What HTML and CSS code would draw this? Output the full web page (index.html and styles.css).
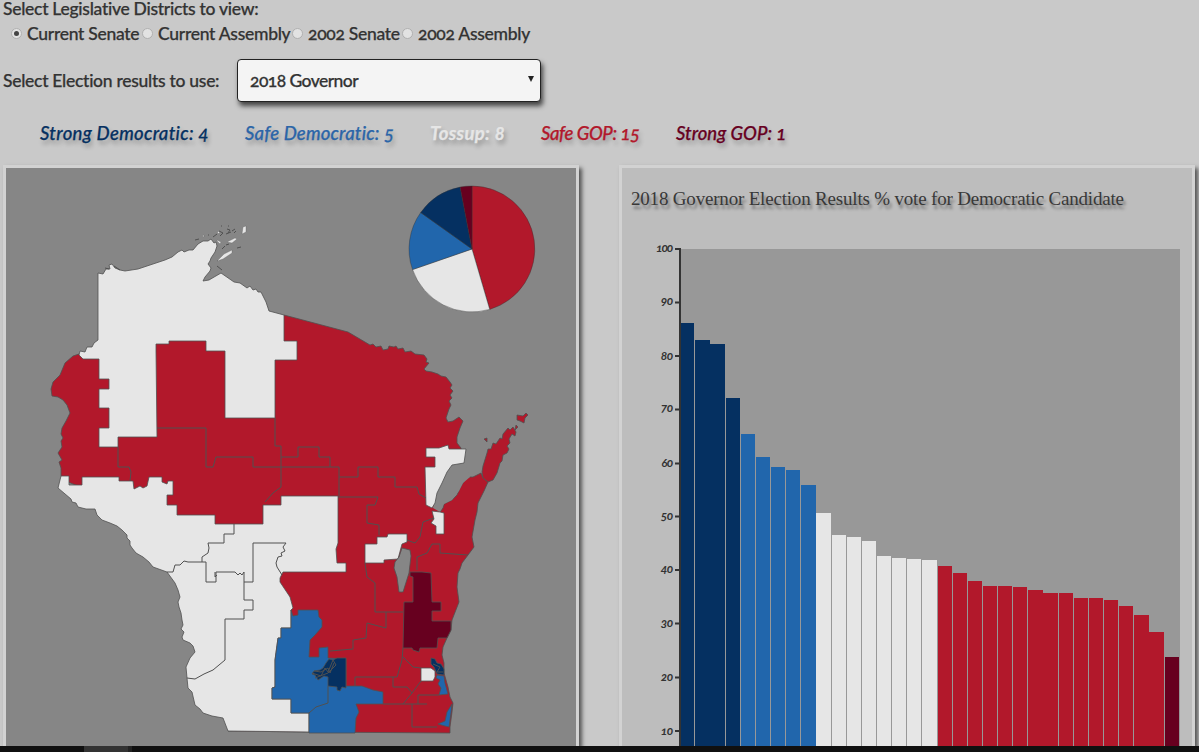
FILE: index.html
```html
<!DOCTYPE html>
<html lang="en">
<head>
<meta charset="utf-8">
<title>Wisconsin Legislative Districts</title>
<link rel="stylesheet" href="styles.css">
</head>
<body>
<main class="page">
  <form class="controls">
    <div class="prompt">Select Legislative Districts to view:</div>
    <div class="radios">
      <label class="option"><span class="dot dot-on"></span><span>Current Senate</span></label>
      <label class="option"><span class="dot"></span><span>Current Assembly</span></label>
      <label class="option"><span class="dot"></span><span>2002 Senate</span></label>
      <label class="option"><span class="dot"></span><span>2002 Assembly</span></label>
    </div>
    <div class="election">
      <span class="election-label">Select Election results to use:</span>
      <div class="select"><span>2018 Governor</span><svg class="caret" viewBox="0 0 6 6"><path d="M0 0h6L3 6z"/></svg></div>
    </div>
  </form>
  <div class="summary">
    <span class="tally strong-dem">Strong Democratic: 4</span>
    <span class="tally safe-dem">Safe Democratic: 5</span>
    <span class="tally tossup">Tossup: 8</span>
    <span class="tally safe-gop">Safe GOP: 15</span>
    <span class="tally strong-gop">Strong GOP: 1</span>
  </div>
  <div class="panels">
    <section class="panel map-panel">
      <svg class="graphic" viewBox="6 168 570 578">
        <g class="districts">
          <path class="r" d="M98 341L110 335L270 335L284 315L348 332L370 345L373 344L376 347L381 346L383 350L388 349L389 346L394 347L396 346L398 349L403 348L405 352L411 351L415 354L424 355L427 359L426 362L429 363L424 369L426 371L432 372L438 374L441 376L446 377L450 382L452 385L450 388L453 391L450 395L452 398L449 401L451 405L449 409L446 418L448 422L453 421L459 417L463 421L460 428L457 437L457 443L461 448L461 451L453 453L440 500L440 512L443 508L444 504L452 500L457 495L460 488L463 483L466 478L470 477L473 477L477 475L481 473L483 478L488 482L484 491L478 503L477 512L475 520L472 537L474 547L468 555L462 563L460 569L458 573L457 587L459 602L452 620L451 630L447 638L443 647L442 655L444 663L444 673L448 687L450 697L453 703L452 712L450 727L450 733L309 732L228 731L230 725L270 700L260 640L260 560L190 530L68 482L61 476L61 468L59 462L62 460L58 453L62 447L61 441L63 438L61 434L62 428L66 421L70 413L67 405L63 400L58 397L52 396L51 389L53 382L60 375L65 363L73 356L79 354L85 356Z"/>
          <path class="w" d="M98 273L103 274L106 269L110 269L109 265L112 264L115 268L120 270L125 271L138 269L153 264L165 260L172 257L178 252L182 250L184 252L189 250L193 250L198 244L203 241L208 241L211 239L214 243L216 242L217 246L215 252L211 258L210 261L208 264L211 268L210 271L205 277L203 281L209 280L221 273L234 282L240 283L247 288L250 286L253 290L256 289L258 292L261 292L266 302L269 311L284 315L284 341L297 341L297 360L275 360L275 418L225 418L225 351L206 351L206 341L169 341L169 344L156 344L156 351L157 437L118 437L118 447L99 447L99 428L109 428L109 408L99 408L99 389L109 389L109 379L99 379L99 359L83 359L79 355L80 351L85 352L87 347L92 347L94 343L98 340Z"/>
          <path class="w" d="M61 476L69 476L69 485L82 485L82 477L119 477L119 481L133 481L134 489L140 486L143 488L147 486L149 477L162 477L162 482L167 484L168 481L173 481L173 495L167 495L167 505L177 505L177 515L215 515L215 524L263 524L263 505L281 505L281 496L338 496L338 543L336 549L337 563L346 563L346 572L283 572L280 578L280 582L290 597L293 608L291 610L291 628L281 628L281 638L278 638L275 660L275 687L272 688L272 699L291 699L291 713L309 713L309 732L228 731L223 718L212 716L203 713L200 709L195 705L192 692L188 688L187 678L186 667L190 658L195 652L193 646L190 643L183 640L182 637L184 632L181 629L183 625L182 620L181 613L179 607L178 602L180 597L178 590L175 583L167 572L153 567L149 562L143 557L136 553L132 548L130 545L130 541L127 538L127 535L122 530L117 526L110 523L102 520L97 515L95 509L86 509L78 507L76 503L72 502L71 499L58 488Z"/>
          <path class="b" d="M291 610L293 616L298 615L298 610L318 610L319 617L322 620L322 627L315 635L310 640L309 657L319 657L319 648L328 647L328 658L346 659L346 686L362 686L373 690L383 692L383 704L356 704L359 712L356 718L355 733L309 733L309 713L291 713L291 699L272 699L272 688L275 687L275 660L278 638L281 638L281 628L291 628Z"/>
          <path class="n" d="M337 658L346 658L346 688L342 687L340 691L337 690L337 687L328 686L328 677L324 676L318 680L315 675L312 674L314 671L320 670L323 668L326 663L329 659L333 660Z"/>
          <path class="m" d="M410 572L422 572L431 573L432 602L441 602L441 611L432 611L432 621L451 621L451 630L447 638L438 638L437 648L420 648L419 652L413 650L412 648L403 648L404 602L413 602L413 577L410 576Z"/>
          <path class="w" d="M377 537L387 537L388 534L407 534L407 542L402 544L398 559L384 560L384 563L365 563L365 544L377 544Z"/>
          <path class="g" d="M402 548L410 550L411 556L409 573L403 592L399 592L397 577L394 568L395 562L399 557Z"/>
          <path class="g bay" d="M462 455L465 463L470 477L463 483L459 491L452 500L444 504L440 512L433 508L436 490L450 462Z"/>
          <path class="w" d="M426 448L439 448L448 445L449 449L466 449L464 463L452 465L447 472L442 483L437 493L435 503L432 508L426 505L425 467L435 467L435 457L426 457Z"/>
          <path class="w" d="M432 511L440 512L444 513L444 534L436 534L436 526L431 523L434 519Z"/>
          <path class="r" d="M483 478L482 472L483 466L487 453L488 449L491 449L493 443L496 444L498 441L500 438L502 439L503 434L508 428L510 430L513 427L516 432L515 436L512 434L509 439L510 443L507 446L509 449L507 453L503 455L502 461L500 463L497 473L493 480L488 482Z"/>
          <path class="r" d="M517 415L523 416L526 413L528 415L525 418L524 423L520 421L517 420ZM484 439L487 438L487 442ZM516 425L518 427L515 430Z"/>
          <path class="n" d="M431 658L435 659L437 663L441 664L444 669L444 675L437 674L434 667L431 664Z"/>
          <path class="b" d="M437 675L444 676L445 683L448 694L439 695L441 688L438 684L440 680L436 678ZM452 704L451 713L449 727L445 726L438 724L445 721L447 712Z"/>
          <path class="w" d="M421 668L431 668L435 671L435 677L433 681L421 681Z"/>
          <path class="w islands" d="M202 236l2-1 0 2zM217 240l4 2-1 2-3-3zM227 242l8-4 2 1-5 4zM217 261l7-7 8-4 0 3-9 6zM217 232l3-1-1 3zM243 227l3-1 0 6-4 2z"/>
        </g>
        <path class="bounds" d="M157 428H206V467H213L216 457H253V467H281M281 467H339V496M118 447V467H129L131 472 130 481M275 418V446H281V487L273 493 265 502M281 457H298V447H319V457H330V467M339 477H358V467H378V477H395V487H417L419 494 426 498M338 497H378L375 505H367V523L379 525V535M434 518L423 522 420 537 415 543 407 540M468 555L440 553V544H432L427 553 417 557V570M365 563L367 577 375 583V612H403M386 612V628L367 623 366 638 353 640V649L330 651M403 648L402 660 397 677H355V686M393 677V687H407L412 693 403 704H427M383 704H403M412 704V727H437M403 657L413 667 421 668M412 693L421 681M418 704V695H439M309 713L316 707 328 703V686M312 673l9 3 4-8 3 4 5-12 3 5-8 8-13 5M314 671l7 1 7-4 2 5 4-10M433 664l7 3-3 5 6 0"/>
        <path class="bounds" d="M234 524V534H224V543H208L209 548 208 553 202 557V562H188L184 561 180 565 175 565 173 572H167M202 562H206V582H216V572H235L238 575 240 573 242 575 244 572V600H253V610H244V619H225V660L213 670 204 674 195 679 187 678M244 582H253V543H286L283 547 285 551 281 553 282 556 278 557 276 563 277 567 282 575M215 572v5l2-2"/>
        <path class="specks" d="M219 231l4 2-3 3M227 229l3 1-2 3M232 231l3-2M226 234l5-2M234 233l2-2M221 226h1M228 226h1M237 248l4-1M195 240l4-1M208 235h1M217 266l5 4M226 245l3-1M213 237l4-3M222 249l3-3M105 268l4 1M114 266l6 4"/>
        <g class="pie">
          <path class="r" d="M472 249V186A63 63 0 0 1 489.7 309.4Z"/>
          <path class="w" d="M472 249L489.7 309.4A63 63 0 0 1 412.5 269.6Z"/>
          <path class="b" d="M472 249L412.5 269.6A63 63 0 0 1 420.7 212.5Z"/>
          <path class="n" d="M472 249L420.7 212.5A63 63 0 0 1 460.1 187.1Z"/>
          <path class="m" d="M472 249L460.1 187.1A63 63 0 0 1 472 186Z"/>
        </g>
      </svg>
    </section>
    <section class="panel chart-panel">
      <svg class="graphic" viewBox="622 168 570 578">
        <text class="title" x="631" y="205" textLength="493">2018 Governor Election Results % vote for Democratic Candidate</text>
        <path class="plot" d="M681 249H1180V746H681z"/>
        <g class="bars">
          <path class="n" d="M681 323h13V746h-13zM695 340h15V746h-15zM710 344h15V746h-15zM726 398h14V746h-14z"/>
          <path class="b" d="M741 434h14V746h-14zM756 457h14V746h-14zM771 467h14V746h-14zM786 470h14V746h-14zM801 485h15V746h-15z"/>
          <path class="w" d="M816 513h15V746h-15zM832 535h14V746h-14zM847 537h14V746h-14zM862 541h14V746h-14zM877 556h14V746h-14zM892 558h14V746h-14zM907 559h14V746h-14zM922 560h15V746h-15z"/>
          <path class="r" d="M938 566h14V746h-14zM953 573h14V746h-14zM968 581h14V746h-14zM983 586h14V746h-14zM998 586h14V746h-14zM1013 587h14V746h-14zM1028 590h15V746h-15zM1043 593h15V746h-15zM1059 593h14V746h-14zM1074 598h14V746h-14zM1089 598h14V746h-14zM1104 600h14V746h-14zM1119 606h14V746h-14zM1134 615h15V746h-15zM1149 632h15V746h-15z"/>
          <path class="m" d="M1165 657h14V746h-14z"/>
        </g>
        <path class="axis" d="M680 248V746M675 249h5M675 302.5h5M675 356h5M675 409.5h5M675 463.5h5M675 516.5h5M675 570h5M675 623.5h5M675 677.5h5M675 731h5"/>
        <g class="ticks">
          <text x="673" y="252" textLength="17">100</text><text x="673" y="305">90</text><text x="673" y="360">80</text><text x="673" y="412">70</text><text x="673" y="467">60</text><text x="673" y="520">50</text><text x="673" y="573">40</text><text x="673" y="627">30</text><text x="673" y="681">20</text><text x="673" y="735">10</text>
        </g>
      </svg>
    </section>
  </div>
  <footer class="taskbar"><div class="thumb"></div><div class="thumb-edge"></div></footer>
</main>
</body>
</html>
```
FILE: styles.css
```css
* { box-sizing: border-box; }
body { margin: 0; background: #c9c9c9; color: #333; font: 500 17.5px/24px Lato, "Open Sans", sans-serif; letter-spacing: -.28px; font-variant-numeric: oldstyle-nums; -webkit-text-stroke: 0.25px currentColor; }
.page { width: 1199px; height: 752px; overflow: hidden; display: flex; flex-direction: column; white-space: nowrap; }
.controls { margin: 0; padding-left: 3px; height: 102px; flex: none; }
.prompt { height: 21px; line-height: 18px; }
.radios { display: flex; height: 25px; padding-left: 8px; }
.option { display: flex; align-items: center; }
.option:nth-child(1) { width: 131px; }
.option:nth-child(2) { width: 150px; }
.option:nth-child(3) { width: 110px; }
.dot { width: 11px; height: 11px; margin-right: 5px; flex: none; border: 1px solid #b0b0b0; border-radius: 50%; background: #e2e2e2; display: flex; align-items: center; justify-content: center; }
.dot-on::after { content: ""; width: 5px; height: 5px; border-radius: 50%; background: #444; }
.election { display: flex; align-items: center; height: 43px; margin-top: 13px; }
.election-label { width: 234px; }
.select { width: 304px; height: 43px; padding: 1px 6px 0 12px; background: #f4f4f4; border: 1px solid #222; border-radius: 4px; box-shadow: 2px 4px 5px #444; display: flex; align-items: center; justify-content: space-between; letter-spacing: -.55px; }
.caret { width: 6px; height: 6px; fill: #222; margin-bottom: 4px; }
.summary { display: flex; padding-left: 40px; height: 63px; padding-top: 19px; flex: none; font-size: 18.5px; font-style: italic; text-shadow: 2px 4px 4px rgba(0,0,0,.28); }
.tally:nth-child(1) { width: 205px; }
.tally:nth-child(2) { width: 185px; }
.tally:nth-child(3) { width: 111px; }
.tally:nth-child(4) { width: 135px; }
.strong-dem { color: #053061; letter-spacing: .3px; }
.safe-dem { color: #2b65a8; letter-spacing: .18px; }
.tossup { color: #e6e6e6; font-weight: 700; letter-spacing: .35px; }
.safe-gop { color: #b2182b; letter-spacing: -.4px; }
.strong-gop { color: #67001f; letter-spacing: 0; }
.panels { flex: 1; min-height: 0; display: flex; gap: 40px; padding-left: 3px; }
.panel { width: 576px; flex: none; border: 3px solid #d2d2d2; border-bottom: 0; box-shadow: 3px 3px 4px #555; }
.map-panel { background: #868686; }
.chart-panel { background: #bdbdbd; }
.graphic { display: block; width: 570px; height: 578px; }
.r { fill: #b2182b; }
.w { fill: #e6e6e6; }
.b { fill: #2166ac; }
.n { fill: #053061; }
.m { fill: #67001f; }
.g { fill: #868686; }
.districts path { stroke: #505050; stroke-width: .8; }
.districts .bay { stroke: none; }
.districts .islands { stroke-width: .3; }
.bounds { fill: none; stroke: #505050; stroke-width: 1; }
.specks { fill: none; stroke: #505050; stroke-width: 1; }
.pie path { stroke: #333; stroke-width: .4; }
.plot { fill: #989898; }
.bars { shape-rendering: crispEdges; }
.axis { fill: none; stroke: #333; stroke-width: 2; }
.title { font: 19px "Liberation Serif", serif; letter-spacing: 0; fill: #383838; text-shadow: 2px 4px 3px rgba(0,0,0,.4); }
.ticks { font: italic 700 12px Lato, sans-serif; letter-spacing: -.3px; font-variant-numeric: oldstyle-nums; fill: #333; text-anchor: end; -webkit-text-stroke: 0; }
.taskbar { height: 6px; flex: none; background: #101010; padding-left: 84px; display: flex; position: relative; }
.thumb { width: 44px; background: #333; }
.thumb-edge { width: 4px; background: #222; }
```
